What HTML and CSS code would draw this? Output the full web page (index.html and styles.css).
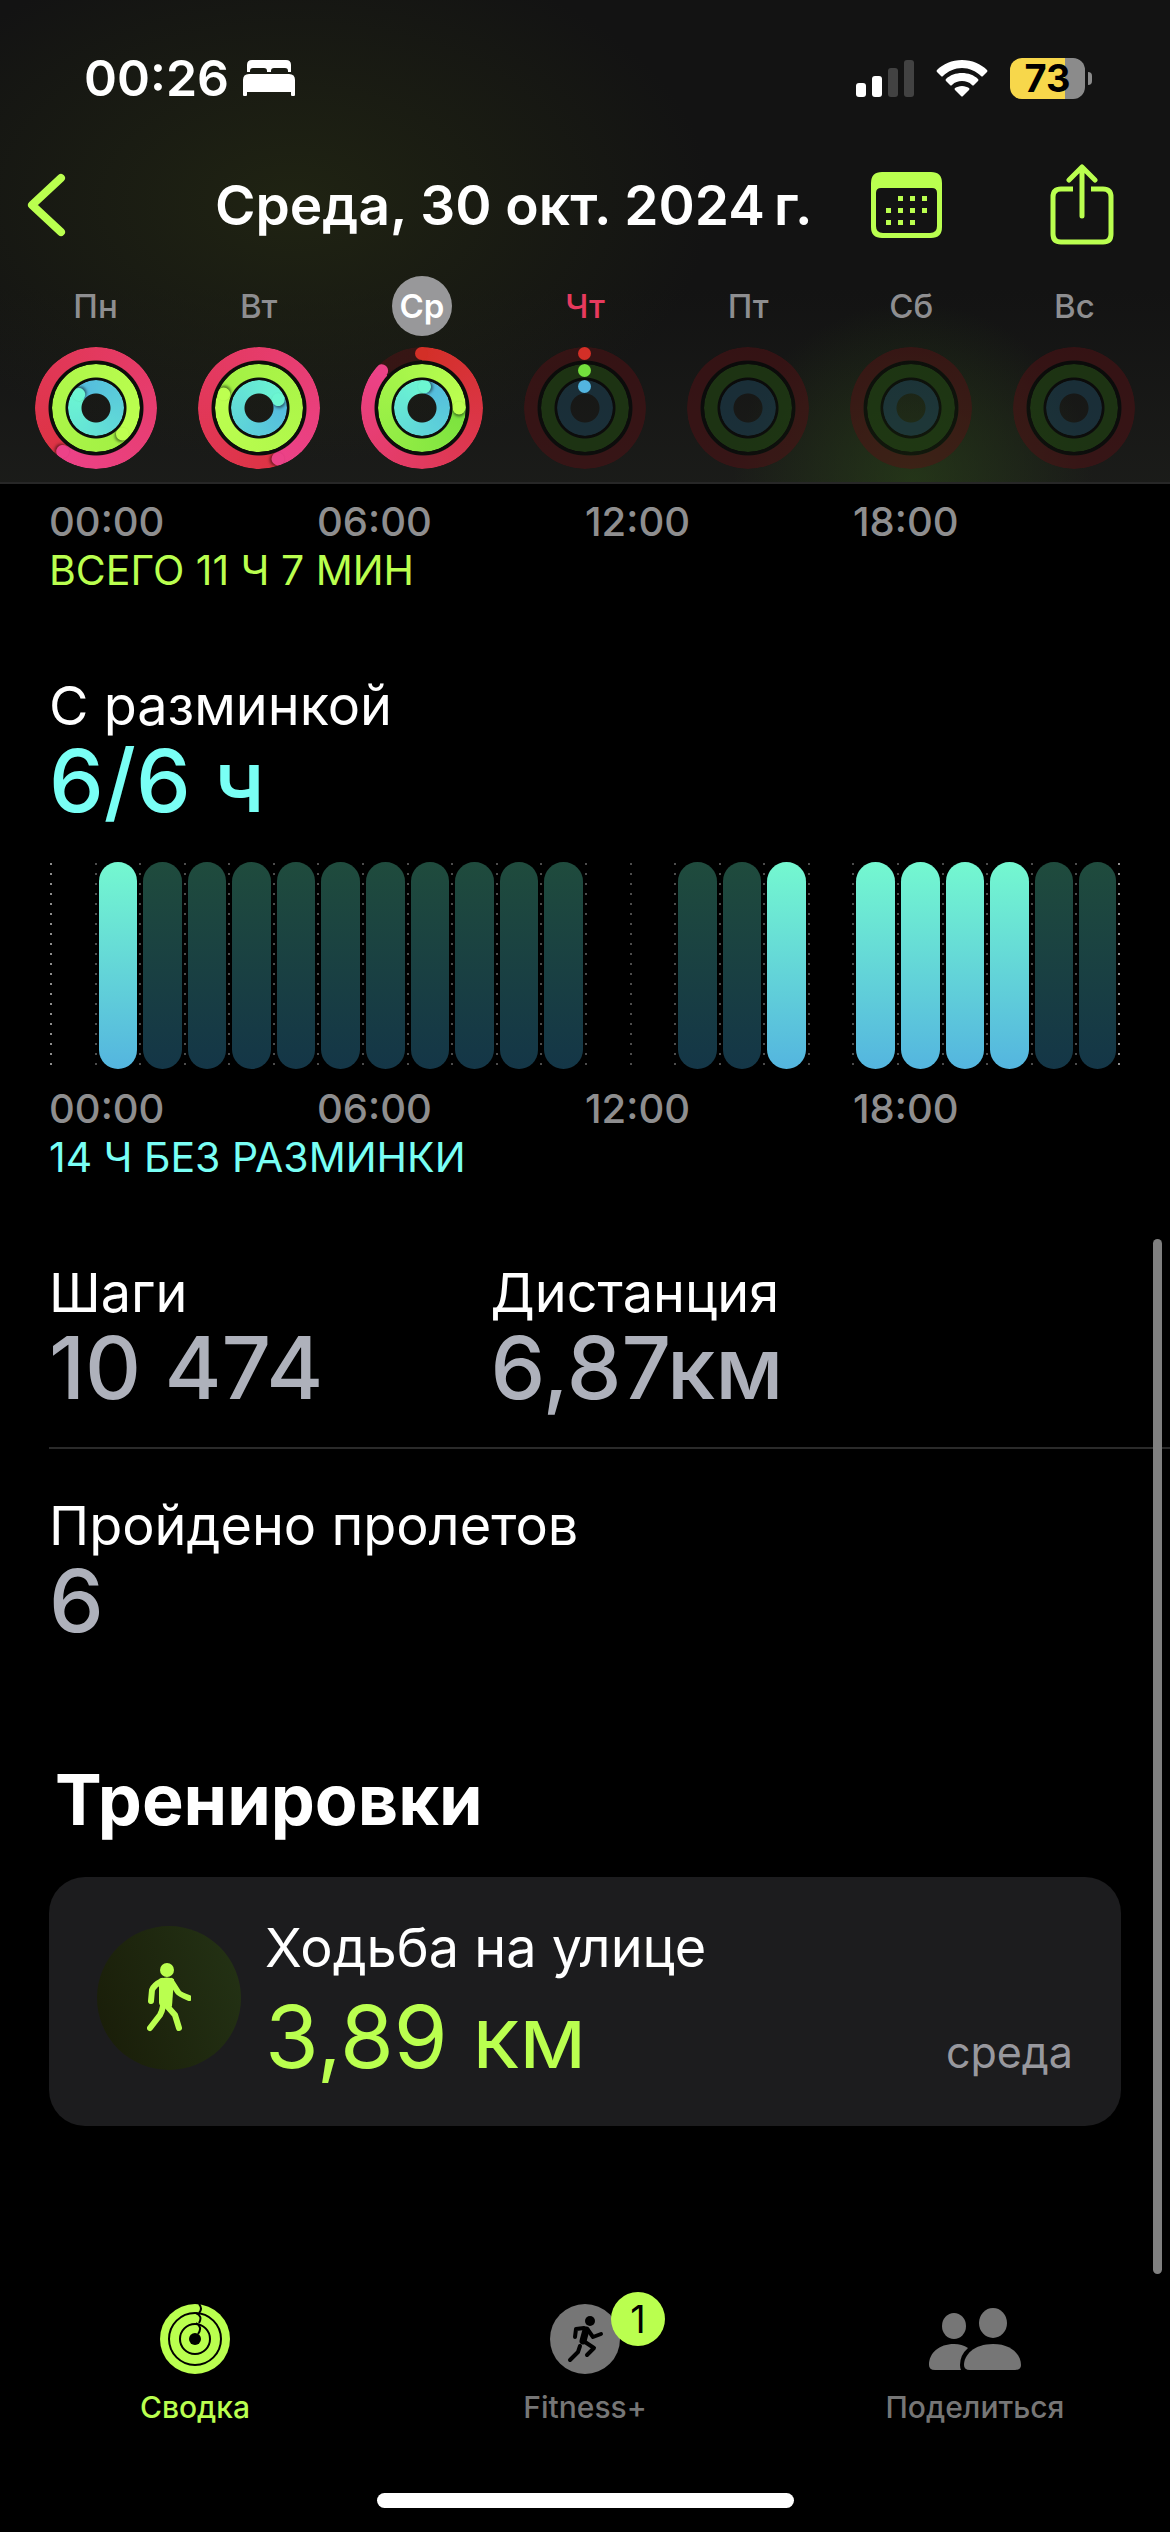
FILE: index.html
```html
<!DOCTYPE html>
<html lang="ru">
<head>
  <meta charset="UTF-8">
  <meta name="viewport" content="width=device-width, initial-scale=1.0">
  <title>Фитнес - Сводка</title>
  <link rel="stylesheet" href="styles.css">
</head>
<body>
  <header class="header">
    <div class="status-bar">
      <div class="status-left">
        <span class="clock">00:26</span>
        <svg class="bed" width="54" height="38" viewBox="0 0 54 38" fill="#fff">
          <path d="M5 13V6q0-5 5-5h34q5 0 5 5v7h-3v-1q0-3-3-3H32q-3 0-3 3v1h-4v-1q0-3-3-3H11q-3 0-3 3v1z"/>
          <path d="M1 36V21q0-6 6-6h40q6 0 6 6v15q0 1-1 1h-2q-1 0-1-1v-3H5v3q0 1-1 1H2q-1 0-1-1z"/>
        </svg>
      </div>
      <div class="status-right">
        <svg width="58" height="38" viewBox="0 0 58 38">
          <rect x="0" y="24" width="10" height="14" rx="3" fill="#fff"/>
          <rect x="16" y="17" width="10" height="21" rx="3" fill="#fff"/>
          <rect x="32" y="9" width="10" height="29" rx="3" fill="#424242"/>
          <rect x="48" y="1" width="10" height="37" rx="3" fill="#424242"/>
        </svg>
        <svg width="52" height="38" viewBox="0 0 52 38" fill="#fff">
          <path d="M26 1C16 1 7 5 1 11q-1 1 0 2l4 4q1 1 2 0c5-5 12-8 19-8s14 3 19 8q1 1 2 0l4-4q1-1 0-2C45 5 36 1 26 1z"/>
          <path d="M26 14c-6 0-12 2-16 6q-1 1 0 2l4 4q1 1 2 0c3-3 6-4 10-4s7 1 10 4q1 1 2 0l4-4q1-1 0-2c-4-4-10-6-16-6z"/>
          <path d="M26 27c-3 0-5 1-7 2q-1 1 0 2l6 6q1 1 2 0l6-6q1-1 0-2c-2-1-4-2-7-2z"/>
        </svg>
        <div class="battery"><span class="battery-level">73</span></div>
      </div>
    </div>

    <nav class="nav-row">
      <button class="icon-btn back" aria-label="Назад">
        <svg width="40" height="66" viewBox="0 0 40 66" fill="none" stroke="#baff4f" stroke-width="8" stroke-linecap="round" stroke-linejoin="round">
          <path d="M34 6L5 33l29 27"/>
        </svg>
      </button>
      <h1 class="title">Среда, 30 окт. 2024&thinsp;г.</h1>
      <button class="icon-btn calendar" aria-label="Календарь">
        <svg width="71" height="66" viewBox="0 0 71 66" fill="#baff4f">
          <path fill-rule="evenodd" d="M11 0h49q11 0 11 11v44q0 11-11 11H11Q0 66 0 55V11Q0 0 11 0zM10 16q-5 0-5 5v33q0 7 7 7h47q7 0 7-7V21q0-5-5-5z"/>
          <path d="M27 24h5v5h-5zM39 24h5v5h-5zM51 24h5v5h-5zM15 36h5v5h-5zM27 36h5v5h-5zM39 36h5v5h-5zM51 36h5v5h-5zM15 48h5v5h-5zM27 48h5v5h-5zM39 48h5v5h-5z"/>
        </svg>
      </button>
      <button class="icon-btn share" aria-label="Поделиться днем">
        <svg width="64" height="82" viewBox="0 0 64 82" fill="none" stroke="#baff4f" stroke-width="5" stroke-linecap="round" stroke-linejoin="round">
          <path stroke-linecap="butt" d="M23 25H11q-8 0-8 8v37q0 8 8 8h42q8 0 8-8V33q0-8-8-8H41"/>
          <path d="M32 52V4M19 16L32 3l13 13"/>
        </svg>
      </button>
    </nav>

    <div class="week">
      <button class="day">
        <span class="day-name">Пн</span>
        <span class="rings">
          <span class="ring move lap" style="--end: 217deg"></span>
          <span class="ring exercise lap" style="--end: 134deg"></span>
          <span class="ring stand lap" style="--end: 309deg"></span>
        </span>
      </button>
      <button class="day">
        <span class="day-name">Вт</span>
        <span class="rings">
          <span class="ring move lap" style="--end: 159deg"></span>
          <span class="ring exercise lap" style="--end: 292deg"></span>
          <span class="ring stand lap" style="--end: 67deg"></span>
        </span>
      </button>
      <button class="day selected">
        <span class="day-name">Ср</span>
        <span class="rings">
          <span class="ring move part" style="--end: 313deg"></span>
          <span class="ring exercise lap fresh" style="--end: 90deg"></span>
          <span class="ring stand lap" style="--end: 8deg"></span>
        </span>
      </button>
      <button class="day today">
        <span class="day-name">Чт</span>
        <span class="rings">
          <span class="ring move zero"></span>
          <span class="ring exercise zero"></span>
          <span class="ring stand zero"></span>
        </span>
      </button>
      <button class="day">
        <span class="day-name">Пт</span>
        <span class="rings">
          <span class="ring move"></span>
          <span class="ring exercise"></span>
          <span class="ring stand"></span>
        </span>
      </button>
      <button class="day">
        <span class="day-name">Сб</span>
        <span class="rings">
          <span class="ring move"></span>
          <span class="ring exercise"></span>
          <span class="ring stand"></span>
        </span>
      </button>
      <button class="day">
        <span class="day-name">Вс</span>
        <span class="rings">
          <span class="ring move"></span>
          <span class="ring exercise"></span>
          <span class="ring stand"></span>
        </span>
      </button>
    </div>
  </header>

  <main class="main-content">
    <section class="block">
      <div class="hours"><span>00:00</span><span>06:00</span><span>12:00</span><span>18:00</span></div>
      <p class="total green">ВСЕГО 11 Ч 7 МИН</p>
    </section>

    <section class="block">
      <h2 class="label">С разминкой</h2>
      <p class="value cyan">6/6 ч</p>
      <div class="chart">
        <div class="hour"></div>
        <div class="hour"><div class="bar on"></div></div>
        <div class="hour"><div class="bar"></div></div>
        <div class="hour"><div class="bar"></div></div>
        <div class="hour"><div class="bar"></div></div>
        <div class="hour"><div class="bar"></div></div>
        <div class="hour"><div class="bar"></div></div>
        <div class="hour"><div class="bar"></div></div>
        <div class="hour"><div class="bar"></div></div>
        <div class="hour"><div class="bar"></div></div>
        <div class="hour"><div class="bar"></div></div>
        <div class="hour"><div class="bar"></div></div>
        <div class="hour"></div>
        <div class="hour"></div>
        <div class="hour"><div class="bar"></div></div>
        <div class="hour"><div class="bar"></div></div>
        <div class="hour"><div class="bar on"></div></div>
        <div class="hour"></div>
        <div class="hour"><div class="bar on"></div></div>
        <div class="hour"><div class="bar on"></div></div>
        <div class="hour"><div class="bar on"></div></div>
        <div class="hour"><div class="bar on"></div></div>
        <div class="hour"><div class="bar"></div></div>
        <div class="hour"><div class="bar"></div></div>
      </div>
      <div class="hours"><span>00:00</span><span>06:00</span><span>12:00</span><span>18:00</span></div>
      <p class="total cyan">14 Ч БЕЗ РАЗМИНКИ</p>
    </section>

    <section class="stats">
      <div>
        <h2 class="label">Шаги</h2>
        <p class="value">10 474</p>
      </div>
      <div>
        <h2 class="label">Дистанция</h2>
        <p class="value">6,87км</p>
      </div>
    </section>
    <section class="floors">
      <h2 class="label">Пройдено пролетов</h2>
      <p class="value">6</p>
    </section>

    <h2 class="section-title">Тренировки</h2>
    <a class="workout" href="#workout">
      <span class="workout-icon">
        <svg width="44" height="70" viewBox="0 0 44 70" fill="none" stroke="#baff4f" stroke-width="6" stroke-linecap="round" stroke-linejoin="round">
          <circle cx="20" cy="7" r="7" fill="#baff4f" stroke="none"/>
          <path d="M15 18q-8 4-10 9L4 38"/>
          <path d="M24 18l7 11q1 2 11 6"/>
          <path fill="#baff4f" stroke="none" d="M12 16q8-3 15 0l-2 27q-1 2-3 2h-6q-3-1-4-5z"/>
          <path d="M16 43q-1 6-3 9L3 65"/>
          <path d="M20 43l8 9 4 13"/>
        </svg>
      </span>
      <span class="workout-text">
        <span class="label">Ходьба на улице</span>
        <span class="value green light">3,89 км</span>
      </span>
      <span class="workout-day">среда</span>
    </a>
  </main>

  <div class="scrollbar"></div>

  <footer class="footer">
    <nav class="tabs">
      <a class="tab active" href="#summary">
        <span class="tab-icon">
          <svg width="70" height="70" viewBox="0 0 70 70" fill="none">
            <circle cx="35" cy="35" r="35" fill="#baff4f"/>
            <g stroke="#000" stroke-width="2">
              <circle cx="35" cy="35" r="26"/>
              <circle cx="35" cy="35" r="15"/>
              <path d="M39 0q4 5 0 9M36 9q7 3 3 10M36 19q7 4 2 11"/>
            </g>
            <circle cx="35" cy="35" r="6" fill="#000"/>
          </svg>
        </span>
        <span class="tab-name">Сводка</span>
      </a>
      <a class="tab" href="#fitness">
        <span class="tab-icon">
          <svg width="70" height="70" viewBox="0 0 70 70" fill="none" stroke="#000" stroke-width="4" stroke-linecap="round" stroke-linejoin="round">
            <circle cx="35" cy="35" r="35" fill="#767676" stroke="none"/>
            <circle cx="40" cy="17" r="5" fill="#000" stroke="none"/>
            <path d="M25 33l1-8 8-1"/>
            <path d="M38 26l5 7 8-3"/>
            <path stroke-width="7" d="M36 26l-3 11"/>
            <path d="M35 38l9 6-7 7"/>
            <path d="M30 42l-2 6-8 8"/>
          </svg>
          <span class="badge">1</span>
        </span>
        <span class="tab-name">Fitness+</span>
      </a>
      <a class="tab" href="#share">
        <span class="tab-icon">
          <svg width="92" height="62" viewBox="0 0 92 62" fill="#767676">
            <ellipse cx="25" cy="18" rx="12" ry="13"/>
            <ellipse cx="64" cy="15" rx="14" ry="15"/>
            <path d="M39 40q-8 7-8 17 0 3 1 5H6q-6 0-6-5c0-12 10-21 25-21q8 0 14 4z"/>
            <path d="M41 62q-6 0-6-5c0-10 10-21 29-21s28 11 28 21q0 5-6 5z"/>
          </svg>
        </span>
        <span class="tab-name">Поделиться</span>
      </a>
    </nav>
    <div class="home-indicator"></div>
  </footer>
</body>
</html>
```
FILE: styles.css
```css
* {
  margin: 0;
  padding: 0;
  box-sizing: border-box;
}

body {
  display: flex;
  flex-direction: column;
  min-height: 100vh;
  position: relative;
  background-color: #000;
  color: #fff;
  font-family: Inter, "Noto Sans", sans-serif;
}

button {
  background: none;
  border: none;
  color: inherit;
  font-family: inherit;
  cursor: pointer;
}

a {
  color: inherit;
  text-decoration: none;
}

svg {
  display: block;
}

/* Header */
.header {
  padding: 44px 0 13px;
  border-bottom: 2px solid #272727;
  background-color: #131313;
  background-image:
    radial-gradient(circle 180px at 78% 100%, rgba(44, 74, 24, 0.55), transparent),
    radial-gradient(ellipse 420px 260px at 25% 42%, rgba(40, 46, 18, 0.6), transparent),
    linear-gradient(transparent 60%, rgba(38, 40, 34, 0.4));
}

.status-bar {
  display: flex;
  justify-content: space-between;
  align-items: center;
  height: 68px;
  padding: 0 85px 0 84px;
}

.status-left {
  display: flex;
  align-items: center;
  gap: 13px;
}

.clock {
  font-size: 50px;
  font-weight: 600;
}

.status-right {
  display: flex;
  align-items: center;
  gap: 22px;
}

.battery {
  position: relative;
  width: 75px;
  height: 41px;
  border-radius: 12px;
  background: linear-gradient(90deg, #f7d74b 73%, #8b8b8b 73%);
}

.battery::after {
  content: "";
  position: absolute;
  left: 78px;
  top: 14px;
  width: 4px;
  height: 13px;
  border-radius: 0 6px 6px 0;
  background-color: #8b8b8b;
}

.battery-level {
  display: block;
  color: #000;
  font-size: 38px;
  font-weight: 700;
  line-height: 41px;
  text-align: center;
}

.nav-row {
  display: flex;
  align-items: center;
  height: 90px;
  margin-top: 48px;
  padding: 0 56px 0 27px;
}

.title {
  flex: 1;
  padding-left: 148px;
  font-size: 55px;
  font-weight: 600;
  white-space: nowrap;
}

.share {
  margin-left: 108px;
}

/* Week rings */
.week {
  display: grid;
  grid-template-columns: repeat(7, 1fr);
  margin-top: 26px;
  padding: 0 14px;
}

.day {
  display: flex;
  flex-direction: column;
  align-items: center;
  gap: 11px;
}

.day-name {
  min-width: 60px;
  height: 60px;
  border-radius: 50%;
  color: #8e8e90;
  font-size: 33px;
  font-weight: 500;
  line-height: 60px;
}

.selected .day-name {
  background-color: #98989a;
  color: #fff;
  font-weight: 600;
}

.today .day-name {
  color: #e63a5e;
}

.rings {
  display: grid;
  place-items: center;
  width: 122px;
  height: 122px;
  background: radial-gradient(circle, transparent 27px, rgba(0, 0, 0, 0.5) 28px 47px, transparent 48px);
}

.ring {
  --end: 0deg;
  grid-area: 1 / 1;
  display: grid;
  justify-items: center;
  align-items: start;
  width: var(--size);
  height: var(--size);
  border-radius: 50%;
  background: var(--dim);
  -webkit-mask: radial-gradient(closest-side, transparent calc(100% - 14px), #000 calc(100% - 13px));
  mask: radial-gradient(closest-side, transparent calc(100% - 14px), #000 calc(100% - 13px));
}

.move {
  --size: 122px;
  --dim: rgba(90, 16, 20, 0.45);
  --start: #d32f27;
  --lap: #dd3343;
  --tip: #ec4288;
}

.exercise {
  --size: 88px;
  --dim: rgba(40, 76, 24, 0.62);
  --start: #74de3d;
  --lap: #a2f044;
  --tip: #bdff50;
}

.stand {
  --size: 56px;
  --dim: rgba(30, 66, 84, 0.55);
  --start: #53b5e0;
  --lap: #53b9de;
  --tip: #6cf6d2;
}

.lap {
  background: conic-gradient(from var(--end), var(--lap), var(--tip));
}

.fresh {
  --lap: #7ae23e;
}

.part {
  background: conic-gradient(var(--start), var(--tip) var(--end), var(--dim) var(--end));
}

/* round ends of the arcs */
.lap::after,
.part::after,
.part::before,
.zero::after {
  content: "";
  grid-area: 1 / 1;
  width: 13px;
  height: 13px;
  border-radius: 50%;
  background-color: var(--tip);
  transform-origin: 50% calc(var(--size) / 2);
  transform: rotate(var(--end));
}

.lap::after {
  box-shadow: 2px 0 3px rgba(0, 0, 0, 0.5);
}

.part::before {
  background-color: var(--start);
  transform: none;
}

.zero::after {
  background-color: var(--start);
}

/* Main content */
.main-content {
  padding: 13px 49px 0;
}

.block {
  margin-bottom: 81px;
}

.hours {
  display: grid;
  grid-template-columns: repeat(4, 1fr);
  color: #8e8e8f;
  font-size: 40px;
  font-weight: 500;
  line-height: 50px;
}

.total {
  font-size: 41px;
  line-height: 46px;
}

.label {
  font-size: 54px;
  font-weight: 400;
  line-height: 64px;
}

.value {
  color: #aeb1bb;
  font-size: 87px;
  font-weight: 500;
  line-height: 86px;
}

.green {
  color: #baff4f;
}

.cyan {
  color: #79fff5;
}

.light {
  font-weight: 400;
}

.chart {
  display: grid;
  grid-template-columns: repeat(24, 1fr);
  height: 207px;
  margin: 38px 0 15px;
  padding: 0 1px;
}

.hour {
  padding: 0 2px 0 4px;
  background: linear-gradient(#4c4c4c 2px, transparent 2px) 0 1px / 2px 10px repeat-y;
}

.hour:first-child {
  background-image: linear-gradient(#8e8e8e 2px, transparent 2px);
}

.hour:last-child {
  background:
    linear-gradient(#4c4c4c 2px, transparent 2px) 0 1px / 2px 10px repeat-y,
    linear-gradient(#8e8e8e 2px, transparent 2px) 100% 1px / 2px 10px repeat-y;
}

.hour:last-child .bar {
  margin-right: 2px;
}

.bar {
  height: 100%;
  border-radius: 20px;
  background: linear-gradient(#1f4b3d, #143647);
}

.bar.on {
  background: linear-gradient(#74f8d0, #54b5df);
}

.stats {
  display: grid;
  grid-template-columns: 13fr 20fr;
  margin-right: -49px;
  padding-bottom: 36px;
  border-bottom: 2px solid #2a2a2a;
}

.floors {
  padding-top: 45px;
}

.section-title {
  margin: 112px 0 33px;
  padding-left: 6px;
  font-size: 70px;
  font-weight: 700;
  line-height: 88px;
}

/* Workout card */
.workout {
  display: flex;
  align-items: center;
  padding: 39px 48px 46px;
  border-radius: 36px;
  background-color: #1c1c1e;
}

.workout-icon {
  display: grid;
  place-items: center;
  width: 144px;
  height: 144px;
  border-radius: 50%;
  background: linear-gradient(70deg, #191c08, #243315);
}

.workout-text {
  display: flex;
  flex-direction: column;
  flex: 1;
  gap: 14px;
  padding-left: 24px;
}

.workout-day {
  align-self: flex-end;
  color: #98989e;
  font-size: 43px;
  line-height: 56px;
}

.scrollbar {
  position: absolute;
  top: 1239px;
  right: 8px;
  width: 9px;
  height: 1035px;
  border-radius: 5px;
  background-color: #808080;
}

/* Tab bar */
.footer {
  margin-top: auto;
  padding-bottom: 24px;
}

.tabs {
  display: grid;
  grid-template-columns: repeat(3, 1fr);
}

.tab {
  display: flex;
  flex-direction: column;
  align-items: center;
  gap: 13px;
  color: #767676;
}

.tab.active {
  color: #baff4f;
}

.tab-icon {
  position: relative;
  display: grid;
  place-items: center;
  height: 70px;
}

.tab-name {
  font-size: 30px;
  font-weight: 500;
  line-height: 40px;
}

.badge {
  position: absolute;
  top: -12px;
  left: 61px;
  width: 54px;
  height: 54px;
  border-radius: 50%;
  background-color: #baff4f;
  color: #000;
  font-size: 38px;
  line-height: 54px;
  text-align: center;
}

.home-indicator {
  width: 417px;
  height: 15px;
  margin: 66px auto 0;
  border-radius: 8px;
  background-color: #fff;
}
```
